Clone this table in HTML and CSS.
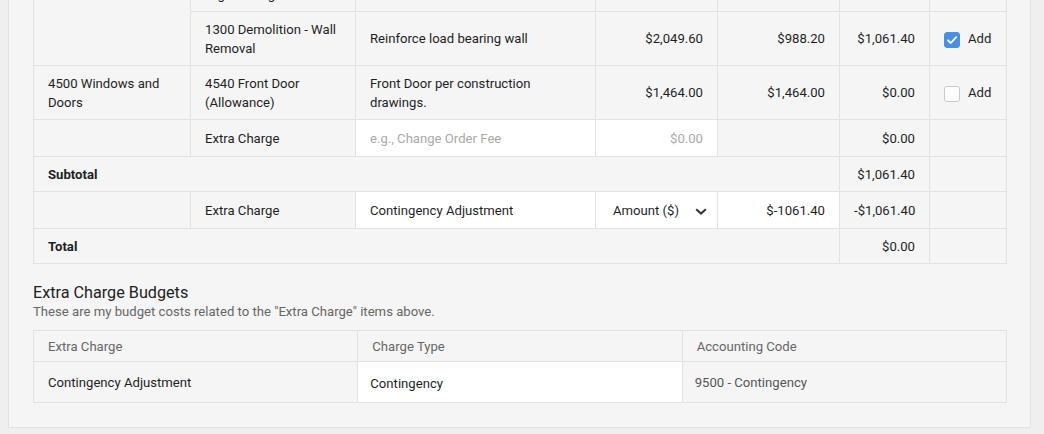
FILE: index.html
```html
<!DOCTYPE html>
<html lang="en">
<head>
<meta charset="utf-8">
<title>Change Order Budget</title>
<link rel="stylesheet" href="styles.css">
</head>
<body>
<div class="panel">
  <table class="items">
    <colgroup>
      <col class="c1"><col class="c2"><col class="c3"><col class="c4"><col class="c5"><col class="c6"><col class="c7">
    </colgroup>
    <tbody>
      <tr class="two">
        <td rowspan="2" class="top">1200 Framing</td>
        <td>1210 Framing -<br>High Ceilings</td>
        <td>Vaulted ceiling framing</td>
        <td class="num">$0.00</td>
        <td class="num">$0.00</td>
        <td class="num">$0.00</td>
        <td></td>
      </tr>
      <tr class="two">
        <td>1300 Demolition - Wall Removal</td>
        <td>Reinforce load bearing wall</td>
        <td class="num">$2,049.60</td>
        <td class="num">$988.20</td>
        <td class="num">$1,061.40</td>
        <td><span class="check"><span class="box on"><svg viewBox="0 0 16 16" width="16" height="16"><path d="M4 8.3 L6.8 11 L12.2 5.2" fill="none" stroke="#fff" stroke-width="1.8" stroke-linecap="round" stroke-linejoin="round"/></svg></span>Add</span></td>
      </tr>
      <tr class="two">
        <td>4500 Windows and Doors</td>
        <td>4540 Front Door (Allowance)</td>
        <td>Front Door per construction drawings.</td>
        <td class="num">$1,464.00</td>
        <td class="num">$1,464.00</td>
        <td class="num">$0.00</td>
        <td><span class="check"><span class="box"></span>Add</span></td>
      </tr>
      <tr class="inrow">
        <td></td>
        <td>Extra Charge</td>
        <td class="field placeholder">e.g., Change Order Fee</td>
        <td class="field num placeholder">$0.00</td>
        <td></td>
        <td class="num">$0.00</td>
        <td></td>
      </tr>
      <tr class="sum">
        <td colspan="5" class="bold">Subtotal</td>
        <td class="num">$1,061.40</td>
        <td></td>
      </tr>
      <tr class="inrow">
        <td></td>
        <td>Extra Charge</td>
        <td class="field">Contingency Adjustment</td>
        <td class="field select"><span class="sel">Amount ($)<svg viewBox="0 0 12 7" width="12" height="7"><path d="M1.2 1.2 L6 5.6 L10.8 1.2" fill="none" stroke="#333" stroke-width="2"/></svg></span></td>
        <td class="field num">$-1061.40</td>
        <td class="num">-$1,061.40</td>
        <td></td>
      </tr>
      <tr class="sum">
        <td colspan="5" class="bold">Total</td>
        <td class="num">$0.00</td>
        <td></td>
      </tr>
    </tbody>
  </table>

  <h2 class="title">Extra Charge Budgets</h2>
  <p class="sub">These are my budget costs related to the "Extra Charge" items above.</p>

  <table class="budgets">
    <thead>
      <tr>
        <th>Extra Charge</th>
        <th>Charge Type</th>
        <th>Accounting Code</th>
      </tr>
    </thead>
    <tbody>
      <tr>
        <td>Contingency Adjustment</td>
        <td class="field type">Contingency</td>
        <td class="code">9500 - Contingency</td>
      </tr>
    </tbody>
  </table>
</div>
</body>
</html>
```

FILE: styles.css
```css
html, body {
  margin: 0;
  padding: 0;
  background: #efefef;
}
body {
  font-family: Roboto, "Liberation Sans", Arial, sans-serif;
  font-size: 13.13px;
  color: #1f1f1f;
  overflow: hidden;
}
.panel {
  box-sizing: border-box;
  width: 1023px;
  margin: -43px 0 0 8px;
  padding: 0 23px 24px 24px;
  background: #f5f5f5;
  border: 1px solid #e2e2e2;
  border-top: none;
}
table {
  width: 100%;
  border-collapse: collapse;
  table-layout: fixed;
}
.items td {
  border: 1px solid #e2e2e2;
  padding: 9px 14px 7px;
  line-height: 18.5px;
  vertical-align: middle;
}
.items .c1 { width: 157px; }
.items .c2 { width: 165px; }
.items .c3 { width: 240px; }
.items .c4 { width: 122px; }
.items .c5 { width: 122px; }
.items .c6 { width: 90px; }
.items td.top { vertical-align: top; }
.items tr.inrow td { height: 20px; line-height: 20px; }
.items tr.sum td { height: 18px; line-height: 18px; }
.num { text-align: right; }
.bold { font-weight: 700; }
.field { background: #fff; }
.placeholder { color: #a9a9a9; }
.items td.select { padding-left: 17px; padding-right: 10px; }
.sel {
  display: flex;
  align-items: center;
  justify-content: space-between;
}
.sel svg { display: block; }
.check {
  display: inline-flex;
  align-items: center;
  gap: 8px;
  vertical-align: middle;
}
.box {
  box-sizing: border-box;
  width: 16px;
  height: 16px;
  border: 1px solid #c9c9c9;
  border-radius: 3px;
  background: #fff;
  display: block;
}
.box.on {
  background: #4a8fe2;
  border-color: #4a8fe2;
}
.box svg { display: block; margin: -1px; }
.title {
  margin: 19px 0 0;
  font-size: 16.2px;
  line-height: 20px;
  font-weight: 400;
  color: #222;
}
.sub {
  margin: 0 0 9px;
  line-height: 18px;
  color: #666;
}
.budgets th, .budgets td {
  border: 1px solid #e2e2e2;
  padding: 7px 14px 5px;
  line-height: 18px;
  text-align: left;
  font-weight: 400;
}
.budgets th { color: #666; }
.budgets td { padding-top: 12px; padding-bottom: 10px; }
.budgets td.type { padding-left: 12px; padding-top: 13px; padding-bottom: 9px; }
.budgets td.code { color: #555; padding-left: 12px; }
```
